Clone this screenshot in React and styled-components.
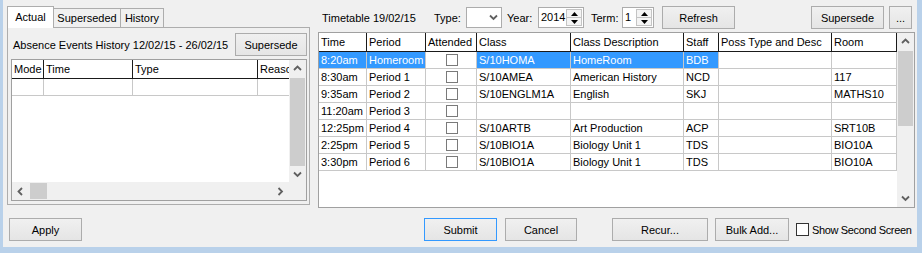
import React from "react";
import styled, { createGlobalStyle } from "styled-components";

const GlobalStyle = createGlobalStyle`
  body {
    margin: 0;
    font-family: "Liberation Sans", Arial, sans-serif;
    font-size: 11px;
    color: #000;
  }
`;

const Frame = styled.div`
  width: 922px;
  height: 253px;
  background: #b9d1ea;
  overflow: hidden;
`;

const Client = styled.div`
  margin-left: 3px;
  width: 914px;
  height: 247px;
  box-sizing: border-box;
  padding: 6px 0 0 4px;
  background: #f0f0f0;
  display: flex;
  flex-direction: column;
`;

const TopArea = styled.div`
  display: flex;
  align-items: flex-start;
  gap: 8px;
  height: 202px;
`;

const LeftPane = styled.div`
  width: 303px;
  display: flex;
  flex-direction: column;
`;

const TabStrip = styled.div`
  display: flex;
  align-items: flex-end;
  height: 21px;
  position: relative;
  z-index: 1;
`;

const Tab = styled.div`
  box-sizing: border-box;
  width: ${(p) => p.$w}px;
  height: ${(p) => (p.$active ? 22 : 19)}px;
  margin-bottom: ${(p) => (p.$active ? -1 : 0)}px;
  margin-left: ${(p) => (p.$first ? 0 : -1)}px;
  line-height: ${(p) => (p.$active ? 20 : 18)}px;
  text-align: center;
  border: 1px solid #adadad;
  border-bottom: none;
  background: ${(p) => (p.$active ? "#ffffff" : "#f0f0f0")};
  position: relative;
  z-index: ${(p) => (p.$active ? 2 : 1)};
`;

const Panel = styled.div`
  box-sizing: border-box;
  height: 178px;
  border: 1px solid #adadad;
  padding: 5px 2px 3px 3px;
  display: flex;
  flex-direction: column;
  gap: 3px;
`;

const PanelHeader = styled.div`
  display: flex;
  align-items: center;
  height: 23px;
`;

const PanelTitle = styled.div`
  flex: 1;
  overflow: hidden;
  white-space: nowrap;
  padding-left: 2px;
  margin-right: 3px;
`;

const Button = styled.button`
  box-sizing: border-box;
  width: ${(p) => p.$w}px;
  height: 23px;
  margin: 0 0 0 ${(p) => p.$ml || 0}px;
  padding: 0;
  flex: none;
  font-family: inherit;
  font-size: 11px;
  color: #000;
  border: 1px solid ${(p) => (p.$focused ? "#3399ff" : "#acacac")};
  background: linear-gradient(#f0f0f0, #e5e5e5);
  line-height: 20px;
`;

const GridBox = styled.div`
  box-sizing: border-box;
  width: ${(p) => p.$w}px;
  height: ${(p) => p.$h}px;
  border: 1px solid #a0a0a0;
  display: grid;
  grid-template-columns: 1fr 17px;
  grid-template-rows: ${(p) => (p.$hscroll ? "1fr 18px" : "1fr")};
  background: #f0f0f0;
`;

const GridBody = styled.div`
  background: #fff;
  overflow: hidden;
`;

const HeaderRow = styled.div`
  display: flex;
  height: 19px;
  box-sizing: border-box;
  border-bottom: 1px solid #1a1a1a;
  white-space: nowrap;
`;

const HeaderCell = styled.div`
  box-sizing: border-box;
  flex: none;
  width: ${(p) => p.$w}px;
  padding-left: 2px;
  line-height: 18px;
  overflow: hidden;
  border-right: ${(p) => (p.$last ? "none" : "1px solid #1a1a1a")};
`;

const Row = styled.div`
  display: flex;
  height: 17px;
  white-space: nowrap;
`;

const Cell = styled.div`
  box-sizing: border-box;
  flex: none;
  width: ${(p) => p.$w}px;
  padding-left: 2px;
  line-height: 16px;
  overflow: hidden;
  border-right: ${(p) => (p.$last ? "none" : "1px solid #c8c8c8")};
  border-bottom: 1px solid #c8c8c8;
  background: ${(p) => (p.$sel ? "#3399ff" : "#fff")};
  color: ${(p) => (p.$sel ? "#fff" : "#000")};
  display: flex;
  justify-content: ${(p) => (p.$center ? "center" : "flex-start")};
  align-items: center;
`;

const CheckBox = styled.span`
  box-sizing: border-box;
  display: inline-block;
  width: ${(p) => p.$size || 12}px;
  height: ${(p) => p.$size || 12}px;
  border: 1px solid ${(p) => p.$color || "#7a7a7a"};
  background: #fff;
  flex: none;
`;

const VScroll = styled.div`
  display: flex;
  flex-direction: column;
  background: #f0f0f0;
`;

const HScroll = styled.div`
  display: flex;
  align-items: stretch;
  background: #f0f0f0;
`;

const ArrowBox = styled.div`
  flex: none;
  width: ${(p) => p.$w || 17}px;
  height: ${(p) => p.$h || 17}px;
  display: flex;
  align-items: center;
  justify-content: center;
`;

const Thumb = styled.div`
  flex: none;
  background: #cdcdcd;
  ${(p) =>
    p.$vertical
      ? `height: ${p.$len}px; margin: 1px 1px 0 1px;`
      : `width: ${p.$len}px; margin: 1px 0 1px 1px;`}
`;

const Spacer = styled.div`
  flex: 1;
`;

const Corner = styled.div`
  background: #f0f0f0;
`;

const RightPane = styled.div`
  width: 597px;
  display: flex;
  flex-direction: column;
  gap: 3px;
`;

const Toolbar = styled.div`
  display: flex;
  align-items: center;
  height: 23px;
  padding-left: 4px;
`;

const Label = styled.div`
  flex: none;
  width: ${(p) => p.$w}px;
  margin-left: ${(p) => p.$ml || 0}px;
  white-space: nowrap;
`;

const Field = styled.div`
  box-sizing: border-box;
  flex: none;
  width: ${(p) => p.$w}px;
  height: 21px;
  border: 1px solid #acacac;
  background: #fff;
  display: flex;
  align-items: stretch;
`;

const FieldText = styled.div`
  flex: 1;
  padding-left: 2px;
  line-height: 19px;
`;

const ComboArrow = styled.div`
  width: 16px;
  display: flex;
  align-items: center;
  justify-content: center;
`;

const SpinButtons = styled.div`
  width: 14px;
  margin: 1px 1px 1px 0;
  display: flex;
  flex-direction: column;
  border: 1px solid #c4c4c4;
  background: #f4f4f4;
`;

const SpinHalf = styled.div`
  flex: 1;
  display: flex;
  align-items: center;
  justify-content: center;
  & + & {
    border-top: 1px solid #c4c4c4;
  }
`;

const BottomRow = styled.div`
  display: flex;
  align-items: center;
  height: 23px;
  margin-top: 10px;
`;

const CheckLabel = styled.label`
  display: flex;
  align-items: center;
  margin-left: 7px;
  gap: 3px;
  white-space: nowrap;
  letter-spacing: -0.35px;
`;

const Chevron = ({ dir }) => {
  const pts = {
    up: "1,5 4.5,1.5 8,5",
    down: "1,1.5 4.5,5 8,1.5",
    left: "5,1 1.5,4.5 5,8",
    right: "1.5,1 5,4.5 1.5,8",
  }[dir];
  const horiz = dir === "left" || dir === "right";
  return (
    <svg width={horiz ? 7 : 9} height={horiz ? 9 : 7} viewBox={horiz ? "0 0 7 9" : "0 0 9 7"}>
      <polyline points={pts} fill="none" stroke="#606060" strokeWidth="1.8" />
    </svg>
  );
};

const Tri = ({ up }) => (
  <svg width="7" height="4" viewBox="0 0 7 4">
    <polygon points={up ? "0,4 3.5,0 7,4" : "0,0 3.5,4 7,0"} fill="#000" />
  </svg>
);

const leftCols = [
  { label: "Mode", w: 32 },
  { label: "Time", w: 89 },
  { label: "Type", w: 125 },
  { label: "Reason", w: 31 },
];

const mainCols = [
  { key: "time", label: "Time", w: 48 },
  { key: "period", label: "Period", w: 59 },
  { key: "att", label: "Attended", w: 51, check: true },
  { key: "cls", label: "Class", w: 94 },
  { key: "desc", label: "Class Description", w: 113 },
  { key: "staff", label: "Staff", w: 35 },
  { key: "poss", label: "Poss Type and Desc", w: 113 },
  { key: "room", label: "Room", w: 65 },
];

const selectedKeys = ["time", "period", "cls", "desc", "staff"];

const rows = [
  { time: "8:20am", period: "Homeroom", cls: "S/10HOMA", desc: "HomeRoom", staff: "BDB", poss: "", room: "" },
  { time: "8:30am", period: "Period 1", cls: "S/10AMEA", desc: "American History", staff: "NCD", poss: "", room: "117" },
  { time: "9:35am", period: "Period 2", cls: "S/10ENGLM1A", desc: "English", staff: "SKJ", poss: "", room: "MATHS10" },
  { time: "11:20am", period: "Period 3", cls: "", desc: "", staff: "", poss: "", room: "" },
  { time: "12:25pm", period: "Period 4", cls: "S/10ARTB", desc: "Art Production", staff: "ACP", poss: "", room: "SRT10B" },
  { time: "2:25pm", period: "Period 5", cls: "S/10BIO1A", desc: "Biology Unit 1", staff: "TDS", poss: "", room: "BIO10A" },
  { time: "3:30pm", period: "Period 6", cls: "S/10BIO1A", desc: "Biology Unit 1", staff: "TDS", poss: "", room: "BIO10A" },
];

function Spinner({ value, w }) {
  return (
    <Field $w={w}>
      <FieldText>{value}</FieldText>
      <SpinButtons>
        <SpinHalf>
          <Tri up />
        </SpinHalf>
        <SpinHalf>
          <Tri />
        </SpinHalf>
      </SpinButtons>
    </Field>
  );
}

function AbsenceGrid() {
  return (
    <GridBox $w={296} $h={142} $hscroll>
      <GridBody>
        <HeaderRow>
          {leftCols.map((c, i) => (
            <HeaderCell key={c.label} $w={c.w} $last={i === leftCols.length - 1}>
              {c.label}
            </HeaderCell>
          ))}
        </HeaderRow>
        <Row>
          {leftCols.map((c, i) => (
            <Cell key={c.label} $w={c.w} $last={i === leftCols.length - 1} />
          ))}
        </Row>
      </GridBody>
      <VScroll>
        <ArrowBox>
          <Chevron dir="up" />
        </ArrowBox>
        <Thumb $vertical $len={88} />
        <Spacer />
        <ArrowBox $h={16}>
          <Chevron dir="down" />
        </ArrowBox>
      </VScroll>
      <HScroll>
        <ArrowBox $h={18}>
          <Chevron dir="left" />
        </ArrowBox>
        <Thumb $len={17} />
        <Spacer />
        <ArrowBox $h={18}>
          <Chevron dir="right" />
        </ArrowBox>
      </HScroll>
      <Corner />
    </GridBox>
  );
}

function TimetableGrid() {
  return (
    <GridBox $w={597} $h={176}>
      <GridBody>
        <HeaderRow>
          {mainCols.map((c) => (
            <HeaderCell key={c.key} $w={c.w}>
              {c.label}
            </HeaderCell>
          ))}
        </HeaderRow>
        {rows.map((r, i) => (
          <Row key={i}>
            {mainCols.map((c) => (
              <Cell
                key={c.key}
                $w={c.w}
                $center={c.check}
                $sel={i === 0 && selectedKeys.includes(c.key)}
              >
                {c.check ? <CheckBox /> : r[c.key]}
              </Cell>
            ))}
          </Row>
        ))}
      </GridBody>
      <VScroll>
        <ArrowBox>
          <Chevron dir="up" />
        </ArrowBox>
        <Thumb $vertical $len={75} />
        <Spacer />
        <ArrowBox>
          <Chevron dir="down" />
        </ArrowBox>
      </VScroll>
    </GridBox>
  );
}

export default function App() {
  return (
    <Frame>
      <GlobalStyle />
      <Client>
        <TopArea>
          <LeftPane>
            <TabStrip>
              <Tab $w={47} $active $first>
                Actual
              </Tab>
              <Tab $w={68}>Superseded</Tab>
              <Tab $w={44}>History</Tab>
            </TabStrip>
            <Panel>
              <PanelHeader>
                <PanelTitle>Absence Events History 12/02/15 - 26/02/15</PanelTitle>
                <Button $w={72}>Supersede</Button>
              </PanelHeader>
              <AbsenceGrid />
            </Panel>
          </LeftPane>

          <RightPane>
            <Toolbar>
              <Label $w={112}>Timetable 19/02/15</Label>
              <Label $w={32}>Type:</Label>
              <Field $w={36}>
                <FieldText />
                <ComboArrow>
                  <Chevron dir="down" />
                </ComboArrow>
              </Field>
              <Label $w={31} $ml={5}>
                Year:
              </Label>
              <Spinner value="2014" w={46} />
              <Label $w={31} $ml={7}>
                Term:
              </Label>
              <Spinner value="1" w={32} />
              <Button $w={73} $ml={8}>
                Refresh
              </Button>
              <Spacer />
              <Button $w={73}>Supersede</Button>
              <Button $w={23} $ml={5}>
                ...
              </Button>
              <Label $w={3} />
            </Toolbar>
            <TimetableGrid />
          </RightPane>
        </TopArea>

        <BottomRow>
          <Button $w={73} $ml={2}>
            Apply
          </Button>
          <Button $w={73} $ml={342} $focused>
            Submit
          </Button>
          <Button $w={72} $ml={8}>
            Cancel
          </Button>
          <Button $w={96} $ml={35}>
            Recur...
          </Button>
          <Button $w={74} $ml={7}>
            Bulk Add...
          </Button>
          <CheckLabel>
            <CheckBox $size={13} $color="#333" />
            Show Second Screen
          </CheckLabel>
        </BottomRow>
      </Client>
    </Frame>
  );
}
